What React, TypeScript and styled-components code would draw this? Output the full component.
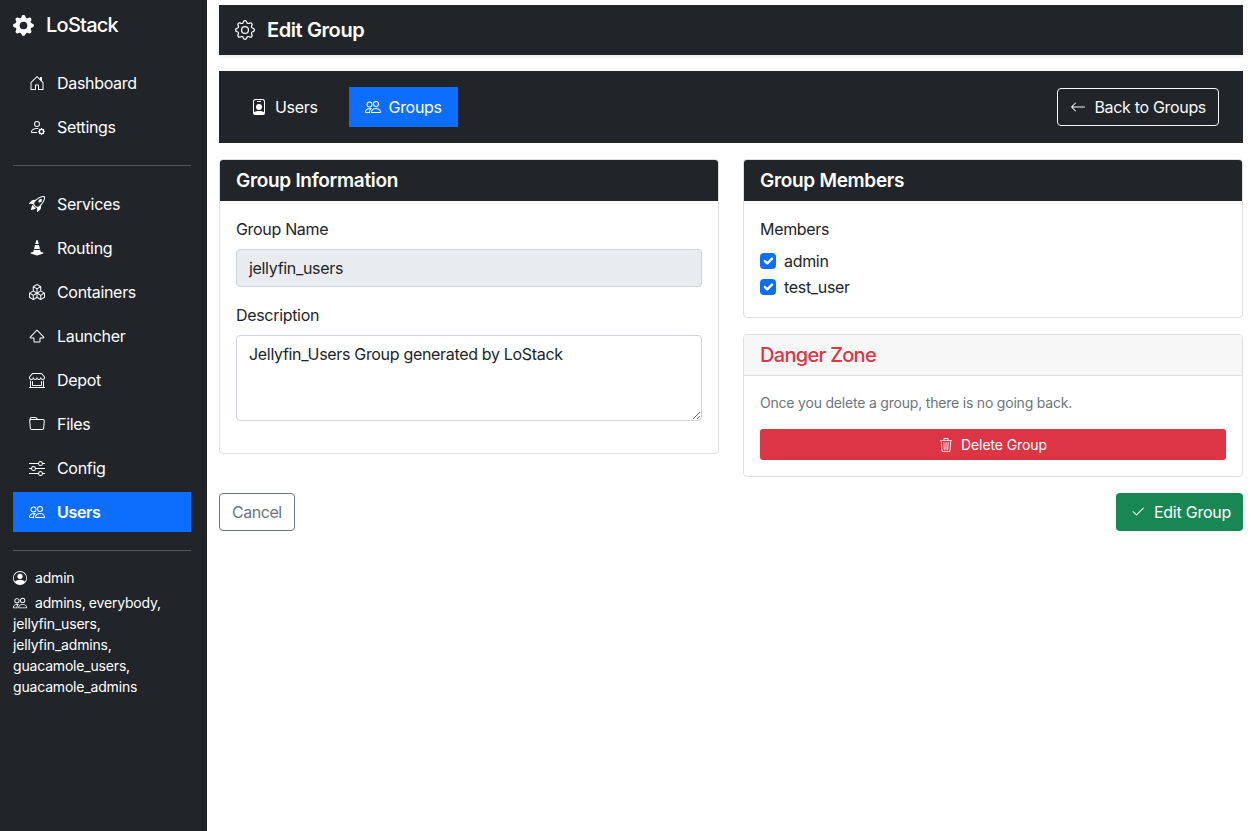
import React, { FC } from 'react'
import styled, { createGlobalStyle } from 'styled-components'
import { IconType } from 'react-icons'
import {
  BsArrowLeft,
  BsBoxes,
  BsCheck2,
  BsConeStriped,
  BsFolder,
  BsGear,
  BsGearFill,
  BsHouseDoor,
  BsPeople,
  BsPersonBadge,
  BsPersonCircle,
  BsPersonGear,
  BsRocketTakeoff,
  BsShift,
  BsShopWindow,
  BsSliders,
  BsTrash3,
} from 'react-icons/bs'

const GlobalStyle = createGlobalStyle`
  html, body {
    margin: 0;
    padding: 0;
    background: #fff;
    color: #212529;
    font-family: Inter, "Liberation Sans", sans-serif;
    font-size: 16px;
    line-height: 1.5;
    letter-spacing: -0.32px;
  }
  * { box-sizing: border-box; }
`

const Layout = styled.div`
  display: flex;
  min-height: 831px;
`
const Sidebar = styled.aside`
  width: 207px;
  flex: none;
  background: #212529;
  color: #fff;
  padding: 0 16px 0 13px;
`
const Brand = styled.div`
  display: flex;
  align-items: center;
  height: 50px;
  gap: 12px;
  font-size: 20px;
  font-weight: 500;
  letter-spacing: -0.75px;
`
const NavList = styled.nav`
  display: flex;
  flex-direction: column;
  gap: 4px;
`
const NavLink = styled.a<{ $active?: boolean }>`
  display: flex;
  align-items: center;
  height: 40px;
  gap: 12px;
  padding: 0 16px;
  color: #fff;
  font-weight: ${p => (p.$active ? 600 : 400)};
  background: ${p => (p.$active ? '#0d6efd' : 'transparent')};
`
const Divider = styled.hr`
  border: 0;
  border-top: 1px solid #54585c;
  margin: 18px 0;
`
const UserDivider = styled(Divider)`
  margin-bottom: 16px;
`
const FirstNav = styled(NavList)`
  margin-top: 13px;
`
const UserInfo = styled.div`
  font-size: 14px;
  line-height: 21px;
  letter-spacing: -0.18px;
  word-spacing: -0.5px;
`
const UserRow = styled.div`
  margin-bottom: 4px;
  svg {
    vertical-align: -2px;
    margin-right: 8px;
  }
`
const Main = styled.main`
  flex: 1;
  min-width: 0;
  padding: 5px 8px 0 12px;
`
const PageHeader = styled.header`
  display: flex;
  align-items: center;
  gap: 12px;
  height: 50px;
  padding: 0 16px;
  background: #212529;
  color: #fff;
  font-size: 20px;
  font-weight: 600;
  letter-spacing: -0.4px;
  box-shadow: 0 2px 4px rgba(0, 0, 0, 0.075);
  margin-bottom: 16px;
`
const TabBar = styled.div`
  display: flex;
  align-items: center;
  justify-content: space-between;
  height: 72px;
  padding: 0 24px 0 16px;
  background: #212529;
  margin-bottom: 16px;
`
const Tabs = styled.div`
  display: flex;
  gap: 15px;
`
const Tab = styled.a<{ $active?: boolean }>`
  display: flex;
  align-items: center;
  gap: 8px;
  height: 40px;
  padding: 0 16px;
  color: #fff;
  background: ${p => (p.$active ? '#0d6efd' : 'transparent')};
`
const BackButton = styled.a`
  display: flex;
  align-items: center;
  gap: 8px;
  height: 38px;
  padding: 0 12px;
  border: 1px solid #f8f9fa;
  border-radius: 4px;
  color: #f8f9fa;
`
const Columns = styled.div`
  display: grid;
  grid-template-columns: 500px 500px;
  column-gap: 24px;
  align-items: start;
`
const Stack = styled.div`
  display: flex;
  flex-direction: column;
  gap: 16px;
`
const Card = styled.section`
  border: 1px solid rgba(0, 0, 0, 0.125);
  border-radius: 4px;
  overflow: hidden;
`
const CardHeader = styled.div<{ $danger?: boolean }>`
  display: flex;
  align-items: center;
  height: 41px;
  padding: ${p => (p.$danger ? '0' : '1px')} 16px 0;
  font-size: ${p => (p.$danger ? '20px' : '19px')};
  font-weight: ${p => (p.$danger ? 500 : 600)};
  letter-spacing: ${p => (p.$danger ? '-0.7px' : '-0.3px')};
  background: ${p => (p.$danger ? '#f7f7f7' : '#212529')};
  color: ${p => (p.$danger ? '#dc3545' : '#fff')};
  border-bottom: ${p => (p.$danger ? '1px solid #dfdfdf' : '0')};
`
const CardBody = styled.div`
  padding: 16px;
`
const Field = styled.div`
  margin-bottom: 16px;
`
const Label = styled.label`
  display: block;
  margin-bottom: 8px;
`
const TextInput = styled.div`
  height: 38px;
  padding: 6px 12px;
  border: 1px solid #ced4da;
  border-radius: 4px;
  background: #e9ecef;
`
const TextArea = styled.textarea`
  display: block;
  width: 100%;
  height: 86px;
  padding: 6px 12px;
  border: 1px solid #ced4da;
  border-radius: 4px;
  font: inherit;
  letter-spacing: inherit;
  color: #212529;
  resize: vertical;
  outline: none;
`
const CheckRow = styled.div`
  display: flex;
  align-items: center;
  gap: 8px;
  height: 24px;
  margin-bottom: 2px;
`
const CheckBox = styled.span`
  display: inline-flex;
  width: 16px;
  height: 16px;
  border-radius: 4px;
  background: #0d6efd;
`
const Muted = styled.p`
  margin: 0 0 16px;
  font-size: 14px;
  line-height: 21px;
  letter-spacing: -0.2px;
  color: #6c757d;
`
const DeleteButton = styled.a`
  display: flex;
  align-items: center;
  justify-content: center;
  gap: 8px;
  height: 31px;
  border-radius: 3px;
  background: #dc3545;
  color: #fff;
  font-size: 14px;
  letter-spacing: -0.1px;
`
const Footer = styled.div`
  display: flex;
  justify-content: space-between;
  margin-top: 16px;
`
const CancelButton = styled.a`
  display: flex;
  align-items: center;
  height: 38px;
  padding: 0 12px;
  border: 1px solid #6c757d;
  border-radius: 4px;
  color: #6c757d;
  letter-spacing: -0.45px;
`
const SaveButton = styled.a`
  display: flex;
  align-items: center;
  gap: 8px;
  height: 38px;
  padding: 0 12px 0 14px;
  border-radius: 4px;
  background: #198754;
  color: #fff;
  letter-spacing: -0.25px;
`

type NavItem = {
  label: string
  icon: IconType
  active?: boolean
}

const topNav: NavItem[] = [
  { label: 'Dashboard', icon: BsHouseDoor },
  { label: 'Settings', icon: BsPersonGear },
]
const mainNav: NavItem[] = [
  { label: 'Services', icon: BsRocketTakeoff },
  { label: 'Routing', icon: BsConeStriped },
  { label: 'Containers', icon: BsBoxes },
  { label: 'Launcher', icon: BsShift },
  { label: 'Depot', icon: BsShopWindow },
  { label: 'Files', icon: BsFolder },
  { label: 'Config', icon: BsSliders },
  { label: 'Users', icon: BsPeople, active: true },
]

const NavLinks: FC<{ items: NavItem[] }> = ({ items }) => (
  <>
    {items.map(el => (
      <NavLink key={el.label} $active={el.active}>
        <el.icon size={16} />
        {el.label}
      </NavLink>
    ))}
  </>
)

const App: FC = () => {
  return (
    <Layout>
      <GlobalStyle />
      <Sidebar>
        <Brand>
          <BsGearFill size={21} />
          LoStack
        </Brand>
        <FirstNav>
          <NavLinks items={topNav} />
        </FirstNav>
        <Divider />
        <NavList>
          <NavLinks items={mainNav} />
        </NavList>
        <UserDivider />
        <UserInfo>
          <UserRow>
            <BsPersonCircle size={14} />
            admin
          </UserRow>
          <UserRow>
            <BsPeople size={14} />
            admins, everybody, jellyfin_users, jellyfin_admins, guacamole_users, guacamole_admins
          </UserRow>
        </UserInfo>
      </Sidebar>
      <Main>
        <PageHeader>
          <BsGear size={20} />
          Edit Group
        </PageHeader>
        <TabBar>
          <Tabs>
            <Tab>
              <BsPersonBadge size={16} />
              Users
            </Tab>
            <Tab $active>
              <BsPeople size={16} />
              Groups
            </Tab>
          </Tabs>
          <BackButton>
            <BsArrowLeft size={16} />
            Back to Groups
          </BackButton>
        </TabBar>
        <Columns>
          <Card>
            <CardHeader>Group Information</CardHeader>
            <CardBody>
              <Field>
                <Label>Group Name</Label>
                <TextInput>jellyfin_users</TextInput>
              </Field>
              <Field>
                <Label>Description</Label>
                <TextArea defaultValue="Jellyfin_Users Group generated by LoStack" />
              </Field>
            </CardBody>
          </Card>
          <Stack>
            <Card>
              <CardHeader>Group Members</CardHeader>
              <CardBody>
                <Label>Members</Label>
                {['admin', 'test_user'].map(name => (
                  <CheckRow key={name}>
                    <CheckBox>
                      <svg width="16" height="16" viewBox="0 0 20 20">
                        <path fill="none" stroke="#fff" strokeLinecap="round" strokeLinejoin="round" strokeWidth="3" d="m6 10 3 3 6-6" />
                      </svg>
                    </CheckBox>
                    {name}
                  </CheckRow>
                ))}
              </CardBody>
            </Card>
            <Card>
              <CardHeader $danger>Danger Zone</CardHeader>
              <CardBody>
                <Muted>Once you delete a group, there is no going back.</Muted>
                <DeleteButton>
                  <BsTrash3 size={14} />
                  Delete Group
                </DeleteButton>
              </CardBody>
            </Card>
          </Stack>
        </Columns>
        <Footer>
          <CancelButton>Cancel</CancelButton>
          <SaveButton>
            <BsCheck2 size={16} />
            Edit Group
          </SaveButton>
        </Footer>
      </Main>
    </Layout>
  )
}

export default App
